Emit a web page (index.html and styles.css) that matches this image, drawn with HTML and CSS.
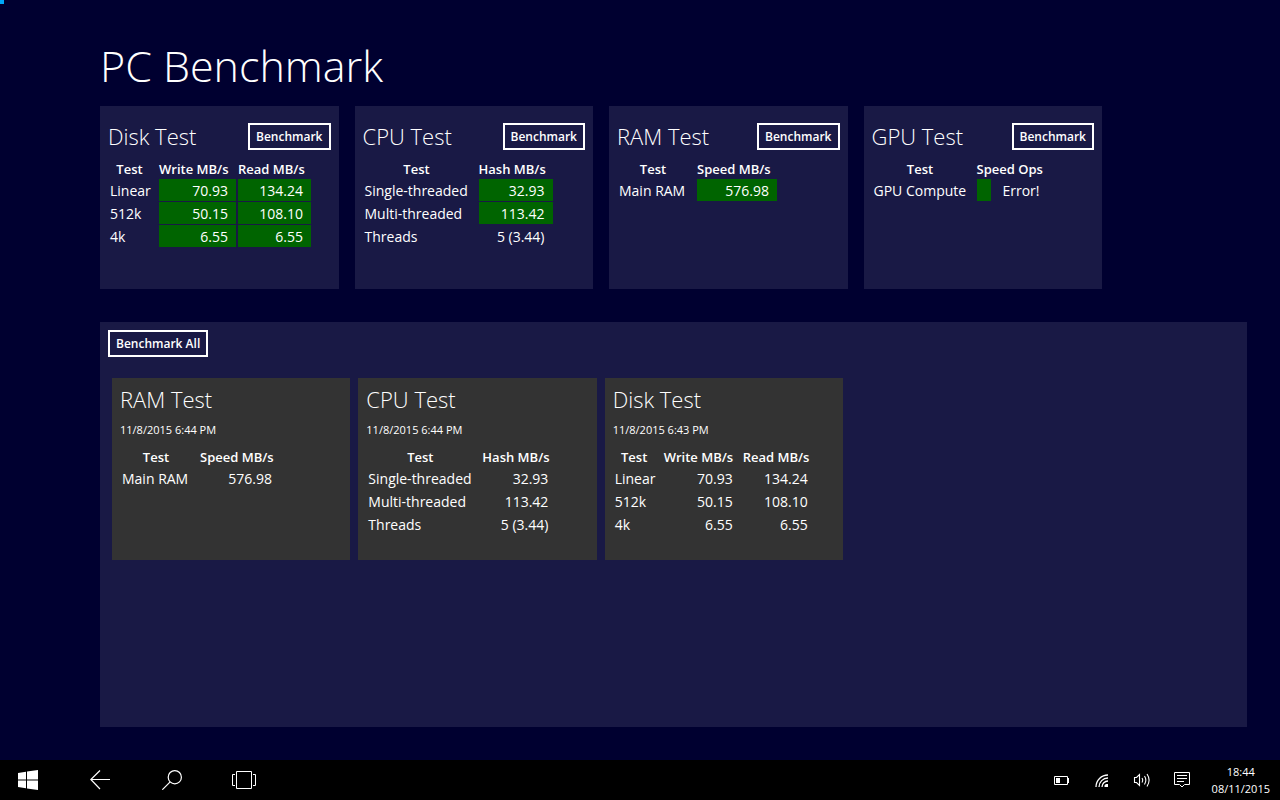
FILE: index.html
```html
<!DOCTYPE html>
<html lang="en">
<head>
<meta charset="utf-8">
<title>PC Benchmark</title>
<link rel="stylesheet" href="styles.css">
</head>
<body>
<span class="corner-mark"></span>
<main class="app">
  <h1 class="app-title">PC Benchmark</h1>

  <div class="tests">
    <section class="card">
      <header class="card-head"><h2 class="card-title">Disk Test</h2><button class="btn" type="button">Benchmark</button></header>
      <table class="results">
        <colgroup><col class="w-disk"><col class="w-write"><col class="w-read"></colgroup>
        <thead><tr><th>Test</th><th class="num">Write MB/s</th><th class="num">Read MB/s</th></tr></thead>
        <tbody>
          <tr><td>Linear</td><td class="num bar">70.93</td><td class="num bar">134.24</td></tr>
          <tr><td>512k</td><td class="num bar">50.15</td><td class="num bar">108.10</td></tr>
          <tr><td>4k</td><td class="num bar">6.55</td><td class="num bar">6.55</td></tr>
        </tbody>
      </table>
    </section>
    <section class="card">
      <header class="card-head"><h2 class="card-title">CPU Test</h2><button class="btn" type="button">Benchmark</button></header>
      <table class="results">
        <colgroup><col class="w-cpu"><col class="w-hash"></colgroup>
        <thead><tr><th>Test</th><th class="num">Hash MB/s</th></tr></thead>
        <tbody>
          <tr><td>Single-threaded</td><td class="num bar">32.93</td></tr>
          <tr><td>Multi-threaded</td><td class="num bar">113.42</td></tr>
          <tr><td>Threads</td><td class="num">5 (3.44)</td></tr>
        </tbody>
      </table>
    </section>
    <section class="card">
      <header class="card-head"><h2 class="card-title">RAM Test</h2><button class="btn" type="button">Benchmark</button></header>
      <table class="results">
        <colgroup><col class="w-ram"><col class="w-speed"></colgroup>
        <thead><tr><th>Test</th><th class="num">Speed MB/s</th></tr></thead>
        <tbody><tr><td>Main RAM</td><td class="num bar">576.98</td></tr></tbody>
      </table>
    </section>
    <section class="card">
      <header class="card-head"><h2 class="card-title">GPU Test</h2><button class="btn" type="button">Benchmark</button></header>
      <table class="results">
        <colgroup><col class="w-gpu"><col class="w-ops"></colgroup>
        <thead><tr><th>Test</th><th class="num">Speed Ops</th></tr></thead>
        <tbody><tr><td>GPU Compute</td><td class="num bar" style="background-size: 14px 100%">Error!</td></tr></tbody>
      </table>
    </section>
  </div>

  <section class="history">
    <button class="btn" type="button">Benchmark All</button>
    <div class="history-list">
      <article class="card past">
        <h2 class="card-title">RAM Test</h2>
        <p class="date">11/8/2015 6:44 PM</p>
        <table class="results">
          <colgroup><col class="w-ram"><col class="w-speed"></colgroup>
          <thead><tr><th>Test</th><th class="num">Speed MB/s</th></tr></thead>
          <tbody><tr><td>Main RAM</td><td class="num">576.98</td></tr></tbody>
        </table>
      </article>
      <article class="card past">
        <h2 class="card-title">CPU Test</h2>
        <p class="date">11/8/2015 6:44 PM</p>
        <table class="results">
          <colgroup><col class="w-cpu"><col class="w-hash"></colgroup>
          <thead><tr><th>Test</th><th class="num">Hash MB/s</th></tr></thead>
          <tbody>
            <tr><td>Single-threaded</td><td class="num">32.93</td></tr>
            <tr><td>Multi-threaded</td><td class="num">113.42</td></tr>
            <tr><td>Threads</td><td class="num">5 (3.44)</td></tr>
          </tbody>
        </table>
      </article>
      <article class="card past">
        <h2 class="card-title">Disk Test</h2>
        <p class="date">11/8/2015 6:43 PM</p>
        <table class="results">
          <colgroup><col class="w-disk"><col class="w-write"><col class="w-read"></colgroup>
          <thead><tr><th>Test</th><th class="num">Write MB/s</th><th class="num">Read MB/s</th></tr></thead>
          <tbody>
            <tr><td>Linear</td><td class="num">70.93</td><td class="num">134.24</td></tr>
            <tr><td>512k</td><td class="num">50.15</td><td class="num">108.10</td></tr>
            <tr><td>4k</td><td class="num">6.55</td><td class="num">6.55</td></tr>
          </tbody>
        </table>
      </article>
    </div>
  </section>
</main>

<footer class="taskbar">
  <nav class="task-nav">
    <button class="task-btn" type="button" aria-label="Start"><svg width="20" height="20" viewBox="0 0 20 20" fill="#fff"><path d="M0 2.9 8 1.7V9.4H0zM9 1.6 20 0V9.4H9zM0 10.5H8V18.3L0 17.1zM9 10.5H20V20L9 18.4z"/></svg></button>
    <button class="task-btn" type="button" aria-label="Back"><svg width="20" height="20" viewBox="0 0 20 20" fill="none" stroke="#fff" stroke-width="1.2"><path d="M10 .5.8 9.5 10 19M1 9.5H20"/></svg></button>
    <button class="task-btn" type="button" aria-label="Search"><svg width="20" height="20" viewBox="0 0 20 20" fill="none" stroke="#fff" stroke-width="1.2"><circle cx="12.8" cy="7.2" r="6.6"/><path d="M8.2 11.8.3 19.7"/></svg></button>
    <button class="task-btn" type="button" aria-label="Task view"><svg width="24" height="20" viewBox="0 0 24 20" fill="none" stroke="#fff"><path d="M4.5 1.5h15v17h-15zM3 4.5H.5v11H3M21 4.5h2.500v11H21"/></svg></button>
  </nav>
  <div class="tray">
    <button class="tray-btn" type="button" aria-label="Battery"><svg width="16" height="16" viewBox="0 0 16 16" fill="none" stroke="#fff"><path d="M.5 4.500h13v8H.5zM14.500 6v5"/><path d="M2 6h4v5H2z" fill="#fff" stroke="none"/></svg></button>
    <button class="tray-btn" type="button" aria-label="Wireless"><svg width="14" height="14" viewBox="0 0 14 14" fill="none" stroke="#fff" stroke-width="1.300"><path d="M1 14A12 12 0 0 1 13 2M4 14A9 9 0 0 1 13 5M7 14A6 6 0 0 1 13 8"/><path d="M9.500 14v-1.500a2 2 0 0 1 2-1.500H13v3z" fill="#fff" stroke="none"/></svg></button>
    <button class="tray-btn" type="button" aria-label="Volume"><svg width="18" height="16" viewBox="0 0 18 16" fill="none" stroke="#fff" stroke-width="1.100"><path d="M1.500 5.500H3.500L6.500 2.500V13.500L3.500 10.500H1.500z"/><path d="M9 6Q10.400 8 9 10.500M11.500 4Q14.200 8 11.500 12.500M14 2Q18.200 8 14 14.500"/></svg></button>
    <button class="tray-btn" type="button" aria-label="Notifications"><svg width="16" height="16" viewBox="0 0 16 16" fill="none" stroke="#fff"><path d="M.5.5h15v12H10.500L8 15 5.500 12.500H.5zM3 3.500h10M3 6.500h10M3 9.500h7"/></svg></button>
    <div class="clock"><time>18:44</time><time>08/11/2015</time></div>
  </div>
</footer>
</body>
</html>
```
FILE: styles.css
```css
* { box-sizing: border-box; }

body {
  margin: 0;
  min-height: 100vh;
  display: flex;
  flex-direction: column;
  background: #000030;
  color: #fff;
  font: 14px/20px "Open Sans", "Noto Sans", sans-serif;
}

h1, h2, p { margin: 0; }
button { font-family: inherit; color: inherit; cursor: pointer; }

.corner-mark {
  position: absolute;
  top: 0;
  left: 0;
  width: 4px;
  height: 4px;
  background: #00a8f8;
}

.app {
  flex: 1;
  display: flex;
  flex-direction: column;
  padding: 36px 33px 33px 100px;
}

.app-title {
  font-size: 43px;
  line-height: 60px;
  font-weight: 300;
  margin-bottom: 10px;
}

.tests {
  display: grid;
  grid-template-columns: repeat(4, 1fr);
  gap: 16px;
  max-width: 1002px;
  margin-bottom: 33px;
}

.card {
  min-height: 183px;
  padding: 16px 8px;
  background: #191945;
}

.card-head {
  display: flex;
  align-items: center;
  justify-content: space-between;
  height: 28px;
  margin-bottom: 11px;
}

.card-title {
  font-size: 22px;
  line-height: 28px;
  font-weight: 300;
}

.btn {
  height: 27px;
  padding: 1px 6px 0;
  border: 2px solid #fff;
  background: transparent;
  font-size: 12px;
  line-height: 16px;
  font-weight: 600;
}

.results {
  table-layout: fixed;
  width: 0;
  border-spacing: 2px 1px;
}

.results th,
.results td {
  height: 22px;
  padding: 2px 8px 0 0;
  line-height: 20px;
  white-space: nowrap;
}

.results th {
  height: 16px;
  padding: 0 8px 2px 0;
  font-size: 13px;
  line-height: 14px;
  font-weight: 600;
}

.results .num { text-align: right; }

.results .bar {
  background: linear-gradient(#006400, #006400) no-repeat;
}

.w-disk { width: 47px; }
.w-write { width: 77px; }
.w-read { width: 73px; }
.w-cpu { width: 112px; }
.w-hash { width: 74px; }
.w-ram { width: 76px; }
.w-speed { width: 80px; }
.w-gpu { width: 101px; }
.w-ops { width: 71px; }

.history {
  flex: 1;
  padding: 8px;
  background: #191945;
}

.history-list {
  display: grid;
  grid-template-columns: repeat(3, 1fr);
  gap: 8px;
  max-width: 735px;
  margin-top: 21px;
  padding-left: 4px;
}

.past {
  padding: 7px 8px;
  min-height: 182px;
  background: #333;
}

.date {
  margin: 7px 0 9px;
  font-size: 11px;
  line-height: 20px;
}

.taskbar {
  display: flex;
  justify-content: space-between;
  height: 40px;
  background: #000;
}

.task-nav, .tray { display: flex; align-items: center; }
.task-nav { gap: 16px; }

.task-btn, .tray-btn {
  display: flex;
  align-items: center;
  justify-content: center;
  height: 40px;
  padding: 0;
  border: 0;
  background: none;
}

.task-btn { width: 56px; }
.tray-btn { width: 40px; }

.clock {
  display: flex;
  flex-direction: column;
  align-items: center;
  padding: 0 10px;
  font-size: 11px;
  line-height: 17px;
}
```
